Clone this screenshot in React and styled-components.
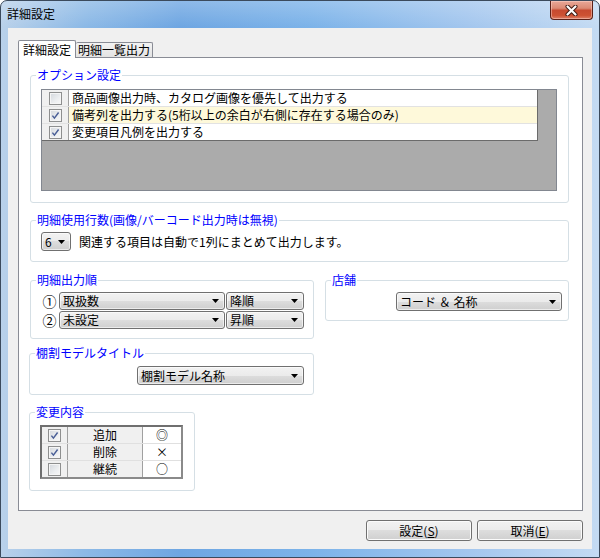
import React from "react";
import styled, { createGlobalStyle } from "styled-components";

const Global = createGlobalStyle`
  html, body { margin: 0; padding: 0; background: #fff; }
  body {
    width: 600px; height: 558px; overflow: hidden;
    font-family: "Noto Sans CJK JP", "Noto Sans", sans-serif;
    font-size: 12px; line-height: 1; color: #000;
  }
  * { box-sizing: border-box; }
`;

const Window = styled.div`
  width: 600px;
  height: 558px;
  border: 1px solid #3b4a5c;
  border-radius: 7px 7px 0 0;
  background:
    linear-gradient(to bottom, rgba(255,255,255,0.22), rgba(255,255,255,0) 26px),
    linear-gradient(to right, #b9d1ea 0%, #8cb9e6 14%, #6ea6e2 30%, #7cb3e9 52%, #a3c6ee 78%, #c4dbf3 100%);
  display: flex;
  flex-direction: column;
  padding: 0 7px 8px;
`;

const TitleBar = styled.div`
  height: 27px;
  display: flex;
  justify-content: space-between;
  align-items: flex-start;
`;

const Title = styled.div`
  padding-top: 7px;
  margin-left: -1px;
  font-size: 12px;
  color: #000;
`;

const CloseBtn = styled.div`
  width: 43px;
  height: 19px;
  margin-right: -1px;
  border: 1px solid #5b2118;
  border-top: none;
  border-radius: 0 0 4px 4px;
  background: linear-gradient(#e9a898 0%, #db8a74 40%, #c74a30 52%, #cd5233 80%, #de8068 100%);
  box-shadow: inset 0 0 0 1px rgba(255,220,210,0.45);
  display: flex;
  align-items: center;
  justify-content: center;
`;

const Client = styled.div`
  flex: 1;
  background: #f0f0f0;
  display: flex;
  flex-direction: column;
  padding: 12px 9px 8px 10px;
`;

const TabStrip = styled.div`
  height: 17px;
  display: flex;
  align-items: flex-end;
`;

const Tab = styled.div`
  position: relative;
  z-index: 1;
  height: ${(p) => (p.$active ? 18 : 15)}px;
  margin-bottom: ${(p) => (p.$active ? -1 : 0)}px;
  padding: 0 ${(p) => (p.$active ? 4 : 2)}px;
  border: 1px solid #898c95;
  border-bottom: none;
  ${(p) => (p.$active ? "" : "border-left: none;")}
  background: ${(p) => (p.$active ? "#fff" : "linear-gradient(#f3f3f3, #e3e3e3)")};
  border-radius: 2px 2px 0 0;
  display: flex;
  align-items: center;
  font-size: 12px;
`;

const Panel = styled.div`
  height: 454px;
  border: 1px solid #898c95;
  background: #fff;
  padding: 17px 13px 0 11px;
  display: flex;
  flex-direction: column;
`;

const Group = styled.div`
  position: relative;
  flex: ${(p) => (p.$grow ? 1 : "none")};
  border: 1px solid #d5dfe5;
  border-radius: 3px;
  height: ${(p) => p.$h}px;
  width: ${(p) => (p.$w ? `${p.$w}px` : "auto")};
  margin-top: ${(p) => p.$mt || 0}px;
  margin-left: ${(p) => p.$ml || 0}px;
  padding: ${(p) => p.$pad || "0"};
  display: flex;
  flex-direction: column;
  align-items: ${(p) => p.$align || "stretch"};
`;

const Legend = styled.span`
  position: absolute;
  top: -8px;
  left: 5px;
  padding: 0 1px;
  background: #fff;
  color: #0000ff;
  font-size: 12px;
  line-height: 14px;
  white-space: nowrap;
`;

const ListBox = styled.div`
  height: 102px;
  border: 1px solid #828790;
  background: #ababab;
`;

const Rows = styled.div`
  width: 496px;
  border-right: 1px solid #6b6b6b;
  border-bottom: 1px solid #6b6b6b;
  background: #fff;
`;

const ListRow = styled.div`
  height: 17px;
  display: grid;
  grid-template-columns: 27px 1fr;
  border-bottom: 1px solid #e2e2e2;
  &:last-child { height: 16px; border-bottom: none; }
`;

const HeadCell = styled.div`
  background: #f0f0f0;
  border-right: 1px solid #a0a0a0;
  display: flex;
  align-items: center;
  justify-content: center;
`;

const TextCell = styled.div`
  background: ${(p) => (p.$hl ? "#fef9da" : "#fff")};
  padding-left: 3px;
  display: flex;
  align-items: center;
  white-space: nowrap;
  font-size: 12px;
`;

const Box = styled.span`
  width: 13px;
  height: 13px;
  border: 1px solid #8e8f8f;
  background: linear-gradient(135deg, #d3d7dc 0%, #eceef0 60%, #f8f8f8 100%);
  box-shadow: inset 0 0 0 1px #f5f5f5;
  display: flex;
  align-items: center;
  justify-content: center;
`;

const Check = ({ on }) => (
  <Box>
    {on && (
      <svg width="11" height="11" viewBox="0 0 11 11">
        <path d="M2.4 5.6 L4.4 8.1 L8.6 2.5" fill="none" stroke="#4a5f97" strokeWidth="1.5" />
      </svg>
    )}
  </Box>
);

const Line = styled.div`
  display: flex;
  align-items: center;
  gap: ${(p) => p.$gap || 0}px;
  white-space: nowrap;
  font-size: 12px;
`;

const ComboBox = styled.div`
  width: ${(p) => p.$w}px;
  height: ${(p) => p.$h || 19}px;
  border: 1px solid #707070;
  border-radius: 3px;
  background: linear-gradient(#f2f2f2 0%, #ebebeb 50%, #dddddd 50%, #cfcfcf 100%);
  box-shadow: inset 0 0 0 1px rgba(255,255,255,0.6);
  display: flex;
  align-items: center;
  justify-content: space-between;
  padding: 0 5px 0 3px;
  font-size: 12px;
  white-space: nowrap;
`;

const Arrow = () => (
  <svg width="7" height="4" viewBox="0 0 7 4">
    <path d="M0 0 H7 L3.5 4 Z" fill="#000" />
  </svg>
);

const Combo = ({ w, h, children }) => (
  <ComboBox $w={w} $h={h}>
    <span>{children}</span>
    <Arrow />
  </ComboBox>
);

const Row3 = styled.div`
  display: flex;
  align-items: flex-start;
  gap: 11px;
  margin-top: 18px;
`;

const OrderGrid = styled.div`
  display: grid;
  grid-template-columns: 17px 166px 78px;
  grid-auto-rows: 18px;
  column-gap: 1px;
  row-gap: 1px;
  align-items: center;
`;

const Num = styled.span`
  text-align: center;
  font-size: 14px;
`;

const Table = styled.div`
  width: 143px;
  border: 2px solid #6f6f6f;
  border-right-color: #8a8a8a;
  border-bottom-color: #8a8a8a;
`;

const TRow = styled.div`
  height: 17px;
  display: grid;
  grid-template-columns: 26px 75px 1fr;
  border-bottom: 1px solid #e0e0e0;
  &:last-child { height: 16px; border-bottom: none; }
`;

const TCell = styled.div`
  background: ${(p) => (p.$white ? "#fff" : "#f0f0f0")};
  border-right: ${(p) => (p.$last ? "none" : "1px solid #a0a0a0")};
  display: flex;
  align-items: center;
  justify-content: center;
  font-size: 12px;
`;

const Buttons = styled.div`
  margin-top: 9px;
  display: flex;
  justify-content: flex-end;
  gap: 5px;
`;

const Button = styled.button`
  width: 106px;
  height: 21px;
  padding: 0;
  border: 1px solid #707070;
  border-radius: 3px;
  background: linear-gradient(#f2f2f2 0%, #ebebeb 50%, #dddddd 50%, #cfcfcf 100%);
  box-shadow: inset 0 0 0 1px #fbfbfb;
  font-family: "Noto Sans CJK JP", "Noto Sans", sans-serif;
  font-size: 12px;
  color: #000;
`;

const options = [
  { on: false, text: "商品画像出力時、カタログ画像を優先して出力する" },
  { on: true, hl: true, text: "備考列を出力する(5桁以上の余白が右側に存在する場合のみ)" },
  { on: true, text: "変更項目凡例を出力する" },
];

const changes = [
  { on: true, label: "追加", mark: "◎" },
  { on: true, label: "削除", mark: "×" },
  { on: false, label: "継続", mark: "○" },
];

export default function App() {
  return (
    <>
      <Global />
      <Window>
        <TitleBar>
          <Title>詳細設定</Title>
          <CloseBtn>
            <svg width="13" height="11" viewBox="0 0 13 11">
              <path d="M2.5 1.5 L10.5 9.5 M10.5 1.5 L2.5 9.5" stroke="#3a1710" strokeWidth="4" strokeLinecap="round" />
              <path d="M2.5 1.5 L10.5 9.5 M10.5 1.5 L2.5 9.5" stroke="#fff" strokeWidth="2.2" strokeLinecap="round" />
            </svg>
          </CloseBtn>
        </TitleBar>
        <Client>
          <TabStrip>
            <Tab $active>詳細設定</Tab>
            <Tab>明細一覧出力</Tab>
          </TabStrip>
          <Panel>
            <Group $h={128} $pad="13px 11px 0 10px">
              <Legend>オプション設定</Legend>
              <ListBox>
                <Rows>
                  {options.map((o) => (
                    <ListRow key={o.text}>
                      <HeadCell>
                        <Check on={o.on} />
                      </HeadCell>
                      <TextCell $hl={o.hl}>{o.text}</TextCell>
                    </ListRow>
                  ))}
                </Rows>
              </ListBox>
            </Group>

            <Group $h={42} $mt={17} $pad="11px 10px 0 10px">
              <Legend>明細使用行数(画像/バーコード出力時は無視)</Legend>
              <Line $gap={8}>
                <Combo w={30}>6</Combo>
                <span>関連する項目は自動で1列にまとめて出力します。</span>
              </Line>
            </Group>

            <Row3>
              <Group $h={59} $w={284} $pad="11px 0 0 10px">
                <Legend>明細出力順</Legend>
                <OrderGrid>
                  <Num>①</Num>
                  <Combo w={166} h={18}>取扱数</Combo>
                  <Combo w={78} h={18}>降順</Combo>
                  <Num>②</Num>
                  <Combo w={166} h={18}>未設定</Combo>
                  <Combo w={78} h={18}>昇順</Combo>
                </OrderGrid>
              </Group>
              <Group $h={41} $grow $pad="11px 6px 0 0" $align="flex-end">
                <Legend>店舗</Legend>
                <Combo w={166}>コード ＆ 名称</Combo>
              </Group>
            </Row3>

            <Group $h={42} $w={285} $mt={14} $ml={-1} $pad="12px 9px 0 0" $align="flex-end">
              <Legend>棚割モデルタイトル</Legend>
              <Combo w={167}>棚割モデル名称</Combo>
            </Group>

            <Group $h={79} $w={166} $mt={17} $ml={-1} $pad="12px 0 0 10px">
              <Legend>変更内容</Legend>
              <Table>
                {changes.map((c) => (
                  <TRow key={c.label}>
                    <TCell>
                      <Check on={c.on} />
                    </TCell>
                    <TCell>{c.label}</TCell>
                    <TCell $white $last>{c.mark}</TCell>
                  </TRow>
                ))}
              </Table>
            </Group>
          </Panel>
          <Buttons>
            <Button>
              設定(<u>S</u>)
            </Button>
            <Button>
              取消(<u>E</u>)
            </Button>
          </Buttons>
        </Client>
      </Window>
    </>
  );
}
